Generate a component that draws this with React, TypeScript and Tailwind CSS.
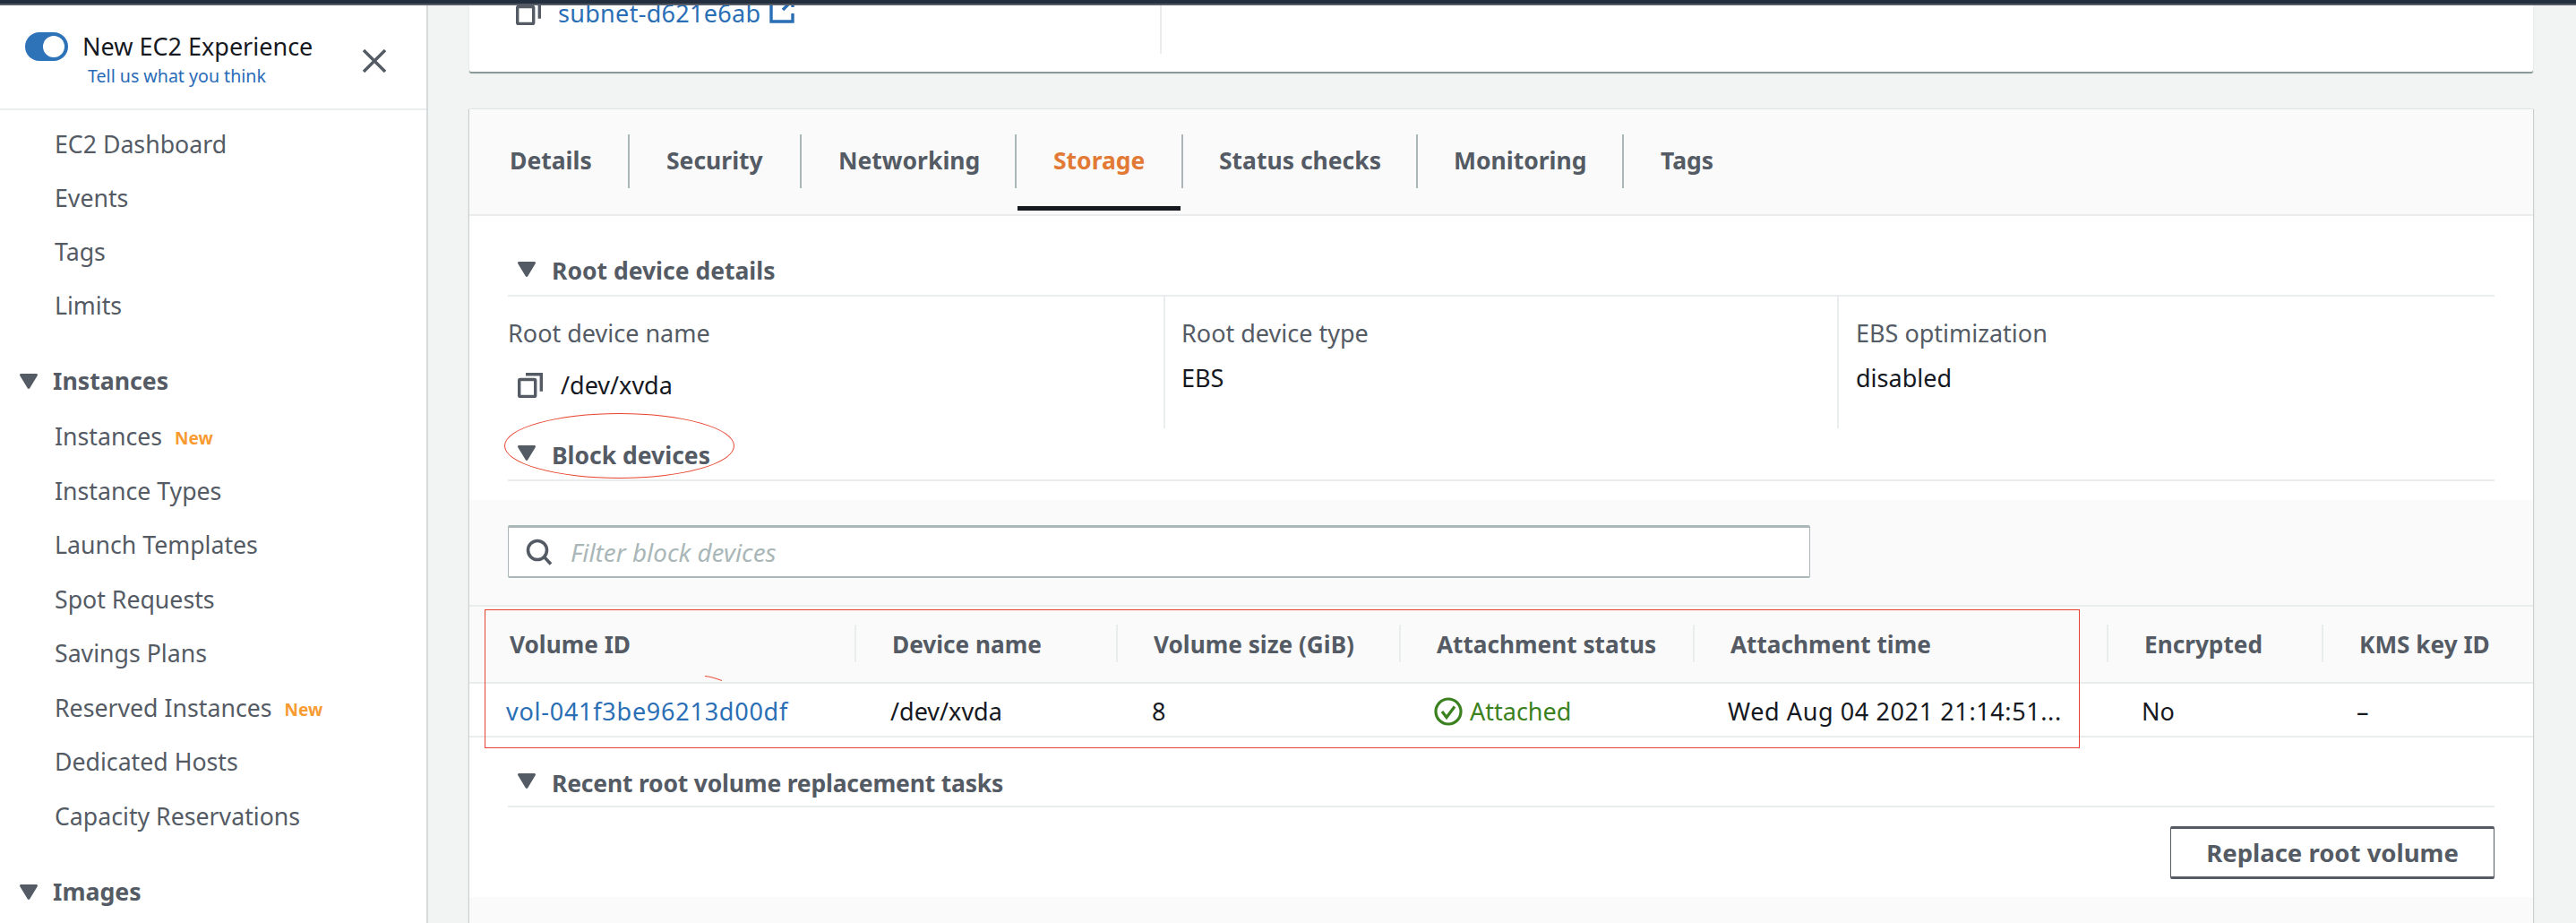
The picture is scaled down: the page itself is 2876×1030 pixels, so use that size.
import React from "react";

const navTop = ["EC2 Dashboard", "Events", "Tags", "Limits"];
const navInstances: { label: string; isNew?: boolean }[] = [
  { label: "Instances", isNew: true },
  { label: "Instance Types" },
  { label: "Launch Templates" },
  { label: "Spot Requests" },
  { label: "Savings Plans" },
  { label: "Reserved Instances", isNew: true },
  { label: "Dedicated Hosts" },
  { label: "Capacity Reservations" },
];

const tabs = [
  { label: "Details", width: "w-[177px] pl-[45px]" },
  { label: "Security", width: "w-[192px] pl-[41px] border-l-2" },
  { label: "Networking", width: "w-[240px] pl-[41px] border-l-2" },
  { label: "Storage", width: "w-[186px] pl-[41px] border-l-2", active: true },
  { label: "Status checks", width: "w-[262px] pl-[40px] border-l-2" },
  { label: "Monitoring", width: "w-[230px] pl-[40px] border-l-2" },
  { label: "Tags", width: "w-[200px] pl-[41px] border-l-2" },
];

const columns = [
  "Volume ID",
  "Device name",
  "Volume size (GiB)",
  "Attachment status",
  "Attachment time",
  "Encrypted",
  "KMS key ID",
];

const Caret = ({ className }: { className: string }) => (
  <svg viewBox="0 0 20 17" className={className} fill="#545b64">
    <path d="M1.5 0h17c1.2 0 1.9 1.2 1.2 2.2l-8.5 14c-.6.9-1.8.9-2.4 0L.3 2.2C-.4 1.2.3 0 1.5 0z" />
  </svg>
);

const CopyIcon = ({ className }: { className: string }) => (
  <svg viewBox="0 0 28 28" className={className} fill="none" stroke="#545b64" strokeWidth="3.4">
    <rect x="1.7" y="7.5" width="18" height="19" rx="1" />
    <path d="M9 1.7h17.3v19" />
  </svg>
);

const SectionHeader = ({ title, className, titleClass = "" }: { title: string; className: string; titleClass?: string }) => (
  <div className={`mx-[43px] flex items-center border-b-2 border-[#eaeded] ${className}`}>
    <Caret className="ml-[11px] h-[17px] w-[20px]" />
    <span className={`ml-[18px] mt-[5px] text-[26.5px] font-bold leading-none text-[#545b64] ${titleClass}`}>{title}</span>
  </div>
);

export default function App() {
  return (
    <div className="relative flex h-[1030px] w-[2876px] flex-col overflow-hidden bg-[#f2f3f3] font-['Noto_Sans',sans-serif]">
      {/* top bar */}
      <div className="h-[6px] shrink-0 border-b-2 border-[#545b64] bg-[#232f3e]" />

      <div className="flex min-h-0 flex-1">
        {/* sidebar */}
        <aside className="w-[478px] shrink-0 border-r-2 border-[#d5dbdb] bg-white">
          <div className="relative flex h-[117px] border-b-2 border-[#eaeded] pl-[28px] pt-[30px]">
            <div className="flex h-[32px] w-[48px] items-center justify-end rounded-full bg-[#2e73b8] pr-[4px]">
              <div className="h-[24px] w-[24px] rounded-full bg-white" />
            </div>
            <div className="ml-[16px]">
              <div className="text-[27px] leading-[32px] text-[#16191f]">New EC2 Experience</div>
              <div className="ml-[6px] mt-[5px] text-[19.6px] leading-[24px] text-[#2a6bb8]">Tell us what you think</div>
            </div>
            <svg viewBox="0 0 26 26" className="absolute left-[405px] top-[49px] h-[26px] w-[26px]" stroke="#545b64" strokeWidth="3.4">
              <path d="M1 1l24 24M25 1L1 25" />
            </svg>
          </div>

          <nav className="pt-[8px] text-[26.7px] text-[#545b64]">
            {navTop.map((item) => (
              <div key={item} className="flex h-[60px] items-center pl-[61px]">
                {item}
              </div>
            ))}
            <div className="mt-[24px] flex h-[60px] items-center pl-[22px]">
              <Caret className="h-[17px] w-[20px]" />
              <span className="ml-[17px] font-bold">Instances</span>
            </div>
            <div className="mt-[2px]">
              {navInstances.map((item) => (
                <div key={item.label} className="flex h-[60.5px] items-center pl-[61px]">
                  {item.label}
                  {item.isNew && <span className="ml-[14px] mt-[4px] text-[19px] font-bold text-[#f79b32]">New</span>}
                </div>
              ))}
            </div>
            <div className="mt-[24px] flex h-[60px] items-center pl-[22px]">
              <Caret className="h-[17px] w-[20px]" />
              <span className="ml-[17px] font-bold">Images</span>
            </div>
          </nav>
        </aside>

        {/* main */}
        <main className="min-w-0 flex-1 pl-[46px] pr-[48px]">
          {/* instance summary card, scrolled off the top */}
          <div className="flex h-[74px] overflow-hidden rounded-b-[2px] bg-white shadow-[0_2px_1px_0_#879596]">
            <div className="flex h-[54px] w-[773px] items-start border-r-2 border-[#eaeded] pl-[52px]">
              <CopyIcon className="-mt-[6px] h-[28px] w-[28px]" />
              <span className="ml-[19px] -mt-[9px] text-[27px] leading-[36px] tracking-[0.3px] text-[#2a6fb5]">subnet-d621e6ab</span>
              <svg viewBox="0 0 28 28" className="-mt-[8px] ml-[10px] h-[28px] w-[28px]" fill="none" stroke="#2a6fb5" strokeWidth="3.4">
                <path d="M10 3H2v23h24v-9M15 13L26 2M18 2h8v8" />
              </svg>
            </div>
          </div>

          {/* details card */}
          <div className="mt-[42px] bg-white shadow-[-1px_0_1px_0_#c9cfcf,1px_0_1px_0_#c9cfcf,0_-1px_1px_0_#eaeded]">
            <div className="flex h-[119px] items-center border-b-2 border-[#eaeded] bg-[#fafafa] pb-[2px]">
              {tabs.map((tab) => (
                <div
                  key={tab.label}
                  className={`relative flex h-[60px] items-center border-[#aab7b8] pt-[1px] text-[26.5px] font-bold ${tab.width} ${
                    tab.active ? "text-[#e27a35]" : "text-[#545b64]"
                  }`}
                >
                  {tab.label}
                  {tab.active && <div className="absolute bottom-[-25px] left-[1px] h-[5px] w-[182px] bg-[#16191f]" />}
                </div>
              ))}
            </div>

            <SectionHeader title="Root device details" className="h-[90px] pt-[30px]" />

            <div className="mx-[43px] grid h-[147px] grid-cols-[732px_752px_1fr] text-[27px]">
              <div className="pt-[23px]">
                <div className="leading-[36px] text-[#545b64]">Root device name</div>
                <div className="mt-[22px] flex items-center pl-[11px] leading-[36px] text-[#16191f]">
                  <CopyIcon className="h-[28px] w-[28px]" />
                  <span className="ml-[20px]">/dev/xvda</span>
                </div>
              </div>
              <div className="border-l-2 border-[#eaeded] pl-[18px] pt-[23px]">
                <div className="leading-[36px] text-[#545b64]">Root device type</div>
                <div className="mt-[14px] leading-[36px] text-[#16191f]">EBS</div>
              </div>
              <div className="border-l-2 border-[#eaeded] pl-[19px] pt-[23px]">
                <div className="leading-[36px] text-[#545b64]">EBS optimization</div>
                <div className="mt-[14px] leading-[36px] text-[#16191f]">disabled</div>
              </div>
            </div>

            <SectionHeader title="Block devices" className="h-[59px] pb-[2px]" />

            <div className="mt-[21px] border-b-2 border-[#eaeded] bg-[#fafafa] pb-[30px] pl-[43px] pt-[28px]">
              <div className="flex h-[59px] w-[1454px] items-center rounded-[2px] border border-t-[3px] border-b-2 border-[#aab7b8] bg-white pl-[19px]">
                <svg viewBox="0 0 30 30" className="h-[30px] w-[30px]" fill="none" stroke="#545b64" strokeWidth="3.6">
                  <circle cx="13" cy="13" r="10.5" />
                  <path d="M20.5 20.5L28 28.5" />
                </svg>
                <span className="ml-[20px] mt-[2px] text-[27.8px] italic text-[#aab7b8]">Filter block devices</span>
              </div>
            </div>

            <div className="grid h-[86px] grid-cols-[430px_292px_316px_328px_462px_240px_233px] items-center border-b-2 border-[#eaeded] bg-[#fafafa] pb-[3px]">
              {columns.map((col, i) => (
                <div
                  key={col}
                  className={`flex h-[42px] items-center border-[#eaeded] pt-[4px] text-[26.2px] font-bold text-[#545b64] ${
                    i === 0 ? "pl-[45px]" : "border-l-2 pl-[40px]"
                  }`}
                >
                  {col}
                </div>
              ))}
            </div>

            <div className="grid h-[60px] grid-cols-[430px_292px_316px_328px_462px_240px_233px] items-center border-b-2 border-[#eaeded] pt-[4px] text-[27px] text-[#16191f]">
              <div className="pl-[41px] tracking-[0.75px] text-[#2a6fb5]">vol-041f3be96213d00df</div>
              <div className="pl-[40px]">/dev/xvda</div>
              <div className="pl-[40px]">8</div>
              <div className="flex items-center pl-[39px] text-[#3b8120]">
                <svg viewBox="0 0 32 32" className="h-[32px] w-[32px]" fill="none" stroke="#3b8120" strokeWidth="3.2">
                  <circle cx="16" cy="16" r="14" />
                  <path d="M9 16l5 6.5 9-12" />
                </svg>
                <span className="ml-[8px]">Attached</span>
              </div>
              <div className="truncate whitespace-nowrap pl-[39px] pr-[20px] tracking-[0.6px]">Wed Aug 04 2021 21:14:51...</div>
              <div className="pl-[39px]">No</div>
              <div className="pl-[39px]">–</div>
            </div>

            <SectionHeader
              title="Recent root volume replacement tasks"
              className="h-[78px] pt-[21px]"
              titleClass="tracking-[-0.2px]"
            />

            <div className="flex justify-end px-[43px] pb-[20px] pt-[21px]">
              <button className="h-[59px] w-[362px] rounded-[2px] border border-t-[3px] border-b-[3px] border-[#545b64] bg-white text-[27.5px] font-bold text-[#545b64]">
                Replace root volume
              </button>
            </div>

            <div className="h-[40px] bg-[#fafafa]" />
          </div>
        </main>
      </div>

      {/* red annotations drawn over the screenshot */}
      <div className="absolute left-[563px] top-[461px] h-[73px] w-[257px] rounded-[50%] border border-[#e8432e]" />
      <div className="absolute left-[541px] top-[680px] h-[155px] w-[1781px] border-[1.5px] border-[#e8432e]" />
      <svg viewBox="0 0 20 6" className="absolute left-[787px] top-[754px] h-[6px] w-[20px]" stroke="#e8432e" fill="none">
        <path d="M0 0.5C6 1 12 3 19 5.5" />
      </svg>
    </div>
  );
}
